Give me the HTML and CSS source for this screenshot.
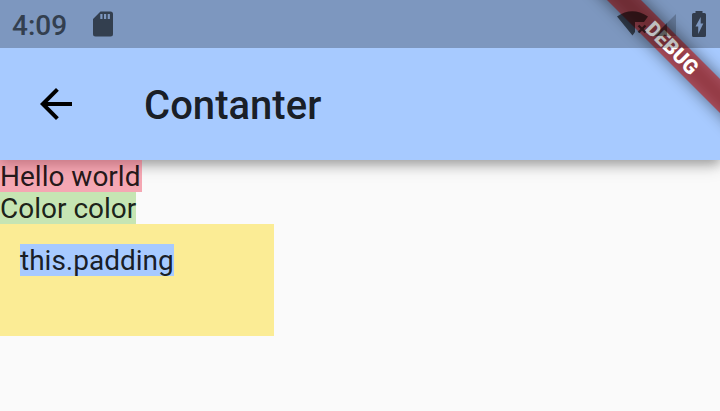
FILE: index.html
```html
<!DOCTYPE html>
<html lang="en">
<head>
<meta charset="utf-8">
<title>Contanter</title>
<link rel="stylesheet" href="styles.css">
</head>
<body>
<div class="screen">
  <header class="app-bar">
    <div class="status-bar">
      <span class="clock">4:09</span>
      <svg class="sd-card" width="20" height="26" viewBox="0 0 20 26"><path fill-rule="evenodd" d="M7.5 0.5H17.5Q20 0.5 20 3V23Q20 25.5 17.5 25.5H2.5Q0 25.5 0 23V8ZM7.3 3V8H9.5V3ZM11 3V8H13.2V3ZM14.7 3V8H16.9V3Z"/></svg>
      <svg class="system-icons" width="92" height="30" viewBox="616 9 92 30">
        <path d="M617 16.5Q632 6 648 16.5L644 22H635V32L632.5 35.5Z"/>
        <path class="stroke" d="M638.5 25.5L645.5 32.5M645.5 25.5L638.5 32.5"/>
        <path class="faint" d="M676 14V36H654Z"/>
        <path class="level" d="M667 23V36H654Z"/>
        <path fill-rule="evenodd" d="M695.5 13V11H702.5V13H704.5Q706 13 706 14.5V35.5Q706 37 704.5 37H693.5Q692 37 692 35.5V14.5Q692 13 693.5 13ZM700.7 17L695.5 26.5H698.2V34L703.3 23.5H700.7Z"/>
      </svg>
    </div>
    <div class="toolbar">
      <svg class="back" width="32" height="32" viewBox="4 4 16 16"><path d="M20 11H7.83l5.59-5.59L12 4l-8 8 8 8 1.41-1.41L7.83 13H20v-2z"/></svg>
      <h1 class="title">Contanter</h1>
    </div>
  </header>
  <main class="content">
    <div class="label pink">Hello world</div>
    <div class="label green">Color color</div>
    <div class="padded"><div class="label blue">this.padding</div></div>
  </main>
  <div class="banner">DEBUG</div>
</div>
</body>
</html>
```
FILE: styles.css
```css
* { box-sizing: border-box; }

body {
  margin: 0;
  font-family: Roboto, sans-serif;
  background: #fafafa;
}

.screen {
  position: relative;
  height: 411px;
  overflow: hidden;
  isolation: isolate;
}

.app-bar {
  height: 160px;
  background: #a7caff;
  box-shadow: 0 4px 10px rgba(0, 0, 0, .24), 0 6px 16px rgba(0, 0, 0, .18);
}

.status-bar {
  position: relative;
  z-index: 2;
  height: 48px;
  padding: 0 12px;
  display: flex;
  align-items: center;
  background: rgba(0, 0, 0, .25);
}

.clock {
  width: 81px;
  padding-top: 3px;
  font-size: 28px;
  font-weight: 500;
  line-height: 32px;
  color: #333f4f;
}

.sd-card { fill: #333f4f; }

.system-icons {
  margin-left: auto;
  fill: rgba(0, 0, 0, .6);
}

.faint { fill: rgba(0, 0, 0, .2); }

.level { fill: rgba(0, 0, 0, .4); }

.stroke {
  fill: none;
  stroke: rgba(0, 0, 0, .6);
  stroke-width: 2.4;
}

.toolbar {
  height: 112px;
  padding-left: 40px;
  display: flex;
  align-items: center;
  gap: 72px;
}

.title {
  margin: 0;
  padding-top: 3px;
  font-size: 40px;
  font-weight: 500;
  line-height: 47px;
  letter-spacing: .02px;
  color: rgba(0, 0, 0, .87);
}

.content {
  display: flex;
  flex-direction: column;
  align-items: flex-start;
}

.label {
  height: 32px;
  padding-top: 1px;
  font-size: 28px;
  line-height: 32px;
  white-space: nowrap;
  color: rgba(0, 0, 0, .87);
}

.pink {
  width: 142px;
  background: rgba(239, 83, 108, .5);
}

.green { background: #c6e5b3; }
.blue { background: #a7caff; }

.padded {
  padding: 20px 100px 60px 20px;
  background: #fbec95;
}

.banner {
  position: absolute;
  z-index: 1;
  left: 592px;
  top: 36px;
  width: 160px;
  height: 24px;
  transform: rotate(45deg);
  font-size: 20.4px;
  font-weight: 900;
  line-height: 24px;
  text-align: center;
  color: #fff;
}

.banner::before,
.banner::after {
  content: "";
  position: absolute;
  z-index: -1;
  inset: 0 -40px;
}

.banner::before {
  background: rgba(0, 0, 0, .5);
  filter: blur(8px);
}

.banner::after { background: rgba(183, 28, 28, .627); }
```
